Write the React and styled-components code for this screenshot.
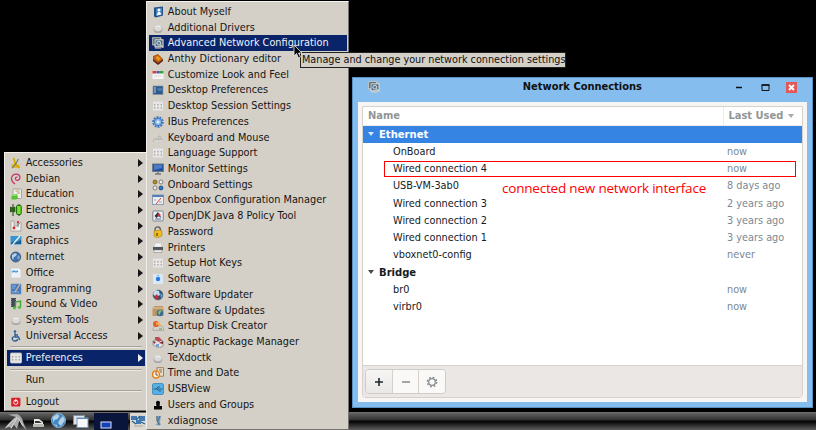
import React from 'react';
import styled, { createGlobalStyle } from 'styled-components';

const GlobalStyle = createGlobalStyle`
  * { box-sizing: border-box; }
  html, body { margin: 0; padding: 0; background: #000; overflow: hidden; }
`;

const Desktop = styled.main`
  position: relative;
  width: 816px;
  height: 430px;
  background: #000;
  overflow: hidden;
  font-family: 'DejaVu Sans Condensed', 'DejaVu Sans', sans-serif;
  font-stretch: condensed;
  font-size: 10.82px;
  color: #111;
  white-space: nowrap;
`;

/* ---------- menus ---------- */

const MenuPanel = styled.nav`
  position: absolute;
  left: ${(p) => p.$x}px;
  top: ${(p) => p.$y}px;
  width: ${(p) => p.$w}px;
  height: ${(p) => p.$h}px;
  padding: 2px 1px 0 2px;
  background: #d4d0c8;
  border: 1px solid;
  border-color: #f4f3f0 #77746f #77746f #f0eeea;
`;

const MenuRow = styled.div`
  display: flex;
  align-items: center;
  height: ${(p) => p.$h || 15.73}px;
  padding: 0 2px 0 3px;
  background: ${(p) => (p.$active ? '#0a246a' : 'transparent')};
  color: ${(p) => (p.$active ? '#f0f2f8' : '#151515')};
`;

const MenuIcon = styled.svg`
  flex: none;
  width: 12px;
  height: 12px;
  margin-right: 3.8px;
`;

const MenuLabel = styled.span`
  flex: 1;
  line-height: 14px;
`;

const Arrow = styled.span`
  border-left: 5px solid currentColor;
  border-top: 4px solid transparent;
  border-bottom: 4px solid transparent;
`;

const Separator = styled.hr`
  height: 2px;
  margin: ${(p) => p.$m};
  border: 0;
  border-top: 1px solid #a6a39c;
  border-bottom: 1px solid #ebe9e4;
`;

/* ---------- window ---------- */

const Window = styled.section`
  position: absolute;
  left: 352px;
  top: 77px;
  width: 461px;
  height: 331px;
  display: flex;
  flex-direction: column;
  padding: 0 5px 5px;
  background: #84bdee;
  border: 1px solid #5a92c4;
`;

const TitleBar = styled.header`
  display: flex;
  align-items: center;
  height: 24px;
  padding: 0 10px 7px 10px;
`;

const Title = styled.h1`
  flex: 1;
  margin: 0;
  padding-left: 46px;
  text-align: center;
  font-size: 11px;
  line-height: 14px;
  font-weight: bold;
  color: #111;
`;

const WindowButtons = styled.svg`
  width: 62px;
  height: 11px;
  margin-top: 1px;
`;

const WindowBody = styled.div`
  flex: 1;
  padding: 4px;
  background: #f6f5f3;
  display: flex;
`;

const ListFrame = styled.div`
  flex: 1;
  display: flex;
  flex-direction: column;
  border: 1px solid #d5d1cd;
  border-radius: 0 0 4px 4px;
  background: #fff;
`;

const HeaderRow = styled.div`
  display: flex;
  align-items: stretch;
  height: 18.7px;
  font-size: 11px;
  font-weight: bold;
  color: #929595;
  line-height: 18px;
  border-bottom: 1px solid #f0eeec;
`;

const NameHeader = styled.span`
  flex: 1;
  padding-left: 5px;
`;

const UsedHeader = styled.span`
  display: flex;
  align-items: center;
  gap: 5px;
  width: 79px;
  padding-left: 4.5px;
  border-left: 1px solid #eeecea;
`;

const Triangle = styled.span`
  border-top: 4px solid currentColor;
  border-left: 3.5px solid transparent;
  border-right: 3.5px solid transparent;
  opacity: 0.8;
`;

const ListRow = styled.div`
  display: flex;
  align-items: center;
  height: 17.22px;
  padding-left: ${(p) => (p.$group ? 4.5 : 30)}px;
  gap: ${(p) => (p.$group ? 5.5 : 0)}px;
  font-size: ${(p) => (p.$group ? '11.15px' : 'inherit')};
  font-weight: ${(p) => (p.$group ? 'bold' : 'normal')};
  color: ${(p) => (p.$selected ? '#fff' : '#151b1e')};
  background: ${(p) => (p.$selected ? '#3584e4' : 'transparent')};
`;

const Name = styled.span`
  flex: 1;
`;

const LastUsed = styled.span`
  width: 75px;
  color: #7b8893;
`;

const Toolbar = styled.footer`
  margin-top: auto;
  height: 32px;
  padding: 3px 2px;
  background: #ebe7e4;
  border-top: 1px solid #d5d1cd;
  border-radius: 0 0 3px 3px;
`;

const ButtonGroup = styled.div`
  display: flex;
  width: 81px;
  height: 25px;
  border: 1px solid #cfcbc7;
  border-radius: 4px;
  overflow: hidden;
`;

const ToolButton = styled.button`
  flex: 1;
  display: grid;
  place-items: center;
  padding: 0;
  border: 0;
  border-right: 1px solid #d5d1cd;
  background: ${(p) => (p.$enabled ? 'linear-gradient(#f6f5f4, #e9e8e6)' : '#faf9f8')};
  &:last-child { border-right: 0; }
`;

/* ---------- overlays ---------- */

const Highlight = styled.div`
  position: absolute;
  left: 384px;
  top: 161px;
  width: 412px;
  height: 16px;
  border: 1px solid #f00;
`;

const Annotation = styled.div`
  position: absolute;
  left: 502px;
  top: 178px;
  font-family: 'Open Sans', 'Noto Sans', sans-serif;
  font-stretch: normal;
  font-size: 13.5px;
  letter-spacing: -0.2px;
  line-height: 20px;
  color: #f00;
`;

const Tooltip = styled.div`
  position: absolute;
  left: 300px;
  top: 52px;
  width: 266px;
  height: 16px;
  padding-left: 1px;
  line-height: 14px;
  background: #d4d0c8;
  border: 1px solid #222;
  font-size: 10.76px;
  color: #111;
`;

const Cursor = styled.svg`
  position: absolute;
  left: 293px;
  top: 44px;
  width: 10px;
  height: 15px;
`;

/* ---------- task bar ---------- */

const TaskBar = styled.div`
  position: absolute;
  left: 0;
  top: 412px;
  width: 816px;
  height: 18px;
  display: flex;
  background: linear-gradient(#747474 0, #5a5a5a 2px, #303030 8px, #030303 9px, #141414 11px, #5c5c5c 18px);
`;

const TaskIcons = styled.svg`
  width: 148px;
  height: 18px;
`;

/* ---------- icon drawings, 12 x 12 grid ---------- */

const ball = (
  <>
    <ellipse cx="6" cy="7.4" rx="4.4" ry="3.6" fill="#aaa9a7" />
    <ellipse cx="6" cy="6.2" rx="3.8" ry="3" fill="#d9d9d8" />
    <path d="M3.5 5Q6 3 8.5 5" stroke="#f4f4f4" fill="none" />
  </>
);
const keys = (
  <>
    <rect x="0.5" y="1" width="11" height="10" rx="1" fill="#e6e5e3" stroke="#cfcdc9" strokeWidth=".8" />
    <path d="M2.7 4v4.500M6 4v4.500M9.300 4v4.500" stroke="#aaa8a4" strokeWidth="1.300" />
    <path d="M2 6.200h8.500" stroke="#f4f4f4" strokeWidth="1" />
  </>
);

const drawings = {
  ball,
  keys,
  accessories: (
    <>
      <path d="M1 8l4-2 5 3-2 2H2z" fill="#dcbc31" />
      <path d="M3.5 1l2 6 4 4" stroke="#d9a900" strokeWidth="1.8" fill="none" />
      <path d="M8.5 2L5 8l-3 3" stroke="#777" strokeWidth="1.2" fill="none" />
    </>
  ),
  debian: (
    <path d="M5 11C2 9 0.8 6 2 3.4 4 .2 9.4.5 10 4.2c.2 2.8-3.4 4.2-4.4 2C5 4.700 6.300 3.600 7.500 4.300" fill="none" stroke="#c93665" strokeWidth="1.2" />
  ),
  education: (
    <>
      <rect x="3" y="1" width="8.500" height="9.500" rx="1" fill="#f1efe7" stroke="#8b8b86" strokeWidth=".7" />
      <path d="M5.500 3h4M7 5h3" stroke="#b49767" />
      <path d="M1 10l2-4h4l1 4-2 1.500H2z" fill="#56c235" />
      <path d="M2.500 7h4" stroke="#c8f4b4" />
    </>
  ),
  electronics: (
    <>
      <path d="M3 0v12M9 0v12" stroke="#173b0c" />
      <path d="M0 3l3 1 2-1v5L3 7 0 8z" fill="#286b12" stroke="#173b0c" strokeWidth=".6" />
      <rect x="6.600" y="1.300" width="4.600" height="9.200" rx="1" fill="#71e52d" stroke="#1d5a0b" strokeWidth="1" />
    </>
  ),
  games: (
    <>
      <path d="M1 1h3v5h3l4-4v9H1z" fill="#f0eeee" stroke="#98918f" strokeWidth=".7" />
      <circle cx="4" cy="8" r="1.400" fill="#d82525" />
      <circle cx="8" cy="2.200" r="1.100" fill="#d82525" />
      <path d="M8 3v4" stroke="#777" />
    </>
  ),
  graphics: (
    <>
      <rect x=".5" y="1" width="11" height="8.500" fill="#3794d2" />
      <path d="M1 8l3-2 3 1 4-2v4H1z" fill="#1c5e91" />
      <path d="M10 1L4 8l-2 3" stroke="#f4f4f0" strokeWidth="1.300" />
      <path d="M1 11h9" stroke="#b9d2df" />
    </>
  ),
  globe: (
    <>
      <circle cx="5.700" cy="6" r="5" fill="#4070a8" stroke="#30517a" strokeWidth=".8" />
      <path d="M2 4l3-2 2 1-1 2-2 1-1 3-1-2z" fill="#b6cfe9" />
      <path d="M7 6l2-2 1 3-2 2z" fill="#7ba5cf" />
    </>
  ),
  office: (
    <>
      <path d="M1 1h7l3 3v7H1z" fill="#edf1f4" stroke="#c7cbd0" strokeWidth=".6" />
      <path d="M2 5l2-1 2 1 2-1" stroke="#4b9fdc" strokeWidth="1.400" fill="none" />
      <path d="M8 1l3 3H8z" fill="#fff" />
    </>
  ),
  programming: (
    <>
      <rect x="1" y="1" width="10" height="10" fill="#467ac0" stroke="#7495bc" strokeWidth=".6" />
      <path d="M2 3h4M2 5h3M2 9h7" stroke="#8eaedc" />
      <path d="M10 1L5 9" stroke="#d5bc88" strokeWidth="1.300" />
    </>
  ),
  sound: (
    <>
      <rect x="1" y="0" width="5" height="9" fill="#414b56" />
      <path d="M1 1v7M6 1v7" stroke="#d9dde0" strokeDasharray="1 1" strokeWidth=".8" />
      <path d="M5.500 10V4l5-1v6" stroke="#41a433" strokeWidth="1.400" fill="none" />
      <ellipse cx="4.500" cy="10" rx="1.700" ry="1.400" fill="#54bd40" />
      <ellipse cx="9.500" cy="9.500" rx="1.700" ry="1.400" fill="#54bd40" />
    </>
  ),
  access: (
    <>
      <circle cx="5" cy="1.500" r="1.300" fill="#285e98" />
      <path d="M5 3v4h3.500l1.300 3M5 5h3M4 6.500C.8 8 2.500 11.200 5 11c1.600 0 2.600-1 2.800-2" fill="none" stroke="#285e98" strokeWidth="1.300" />
    </>
  ),
  logout: (
    <>
      <rect x="1.200" y="1.700" width="9.200" height="8.800" rx="1" fill="#d92129" />
      <circle cx="5.800" cy="6.300" r="2.100" fill="none" stroke="#fff" strokeWidth=".9" />
      <path d="M5.800 3v3" stroke="#fff" />
    </>
  ),
  about: (
    <>
      <path d="M2 1.500l9-1v9l-7 2-2-1z" fill="#244f86" />
      <path d="M4 2.500l6-.7v7L4 10z" fill="#4482bd" />
      <circle cx="7" cy="4" r="1.500" fill="#fff" />
      <path d="M4.500 9.500L6 6h2l1.500 2.500z" fill="#f7faff" />
    </>
  ),
  network: (
    <>
      <rect x=".8" y=".8" width="8" height="7" fill="#29496e" stroke="#cfcbbd" strokeWidth="1.100" />
      <rect x="3" y="2.800" width="8" height="7" fill="#40668d" stroke="#dedaca" strokeWidth="1.100" />
      <circle cx="6.800" cy="6.200" r="2" fill="#5f7fa0" stroke="#ece9dc" strokeWidth=".9" />
      <path d="M8.300 7.700l3 3M3 11h6" stroke="#d8d4c6" strokeWidth="1.200" />
    </>
  ),
  book: (
    <>
      <path d="M1 3l5-2 5 5-5 5-5-5z" fill="#b75b12" />
      <path d="M1 6l5 4 5-4v2l-5 4-5-4z" fill="#5d2310" />
      <path d="M3 4l3-1 3 3-3 2z" fill="#e69823" />
    </>
  ),
  look: (
    <>
      <rect x=".5" y="2" width="11" height="8" fill="#f6f5f5" />
      <rect x=".5" y="2" width="3.500" height="2.500" fill="#dd3c32" />
      <rect x="4.300" y="2" width="3.500" height="2.500" fill="#5a58a4" />
      <rect x="8" y="2" width="3.500" height="2.500" fill="#34a744" />
      <path d="M2 7h8" stroke="#e4d2d2" />
    </>
  ),
  desktop: (
    <>
      <rect x="1" y="2" width="10" height="8.500" fill="#2e5a89" stroke="#8795a6" strokeWidth=".7" />
      <path d="M2 4h2M2 6h2M2 8h2" stroke="#b6cde3" />
      <path d="M5 4h5v3H6z" fill="#477aaa" />
    </>
  ),
  ibus: (
    <>
      <circle cx="6" cy="6" r="4.900" fill="none" stroke="#3b74bb" strokeWidth="1.800" strokeDasharray="2 1" />
      <circle cx="6" cy="6" r="3.700" fill="#8ab8e8" stroke="#3977bf" />
      <circle cx="6" cy="6" r="1.500" fill="#e8f1fb" />
    </>
  ),
  keyboard: (
    <>
      <path d="M1 8l2-2h7l1.500 3v1H1z" fill="#bebcb8" />
      <path d="M2 9h9" stroke="#ecebe8" />
      <path d="M6 5q1-2 3 0" stroke="#aaa8a4" fill="none" />
    </>
  ),
  monitor: (
    <>
      <rect x=".6" y="1" width="10.800" height="7.500" fill="#244fa0" stroke="#677b84" />
      <path d="M2 2h8v3L2 7z" fill="#4b7ac6" />
      <path d="M6 9v2M3 11h6" stroke="#74777a" strokeWidth="1.300" />
    </>
  ),
  onboard: (
    <>
      <circle cx="3" cy="3" r="2" fill="#b58f19" stroke="#5d532d" strokeWidth=".7" />
      <circle cx="9" cy="3" r="2" fill="#eee" stroke="#6d6b64" strokeWidth=".8" />
      <circle cx="3" cy="9" r="2" fill="#eee" stroke="#6d6b64" strokeWidth=".8" />
      <circle cx="9" cy="9" r="2" fill="#2276cc" stroke="#163e6a" strokeWidth=".7" />
    </>
  ),
  openbox: (
    <>
      <rect x=".5" y="1" width="11" height="9.500" fill="#ececf0" stroke="#7b8eac" strokeWidth=".8" />
      <rect x=".5" y="1" width="11" height="2" fill="#547fb7" />
      <path d="M9 4L4 10" stroke="#d14a47" />
      <path d="M2 6h2M7 8h3" stroke="#a4a8b2" />
    </>
  ),
  java: (
    <>
      <rect x=".8" y="1" width="10.400" height="10" rx="1" fill="#eeeef0" stroke="#727a86" strokeWidth=".9" />
      <path d="M6 2L2.500 6l2 2 2-2 3 2z" fill="#233448" />
      <circle cx="7" cy="5" r="1.500" fill="#d52e35" />
      <path d="M3 9h6" stroke="#436a9f" />
    </>
  ),
  lock: (
    <>
      <path d="M3 6V3.500C3 0 8.500 0 8.500 4v2" stroke="#5f5e59" strokeWidth="1.300" fill="none" />
      <path d="M2 5l6-1 2 1v5l-5 2-3-2z" fill="#eebb20" stroke="#a37911" strokeWidth=".5" />
      <path d="M5 7v3" stroke="#54430e" strokeWidth="1.200" />
    </>
  ),
  printer: (
    <>
      <path d="M3 1h6l1 4H2z" fill="#f5f5f5" stroke="#b8b8b8" strokeWidth=".5" />
      <path d="M1 5h10v3H1z" fill="#55585a" />
      <path d="M2 8h8v2.500H2z" fill="#eee" stroke="#7b7b7b" strokeWidth=".5" />
    </>
  ),
  software: (
    <>
      <rect x="1" y="1" width="10" height="10" rx="1" fill="#d7e9fb" />
      <path d="M4.500 3q1.500-2 3 0" stroke="#83b1e8" fill="none" />
      <circle cx="6" cy="6" r="2.200" fill="#2c7adf" />
    </>
  ),
  updater: (
    <>
      <circle cx="6" cy="6" r="5" fill="#284f7d" stroke="#52647b" strokeWidth=".5" />
      <path d="M3 1l4 1 1 4-4 2-3-3z" fill="#c8dbeb" />
      <path d="M2 8l3-3 2 4-2 2z" fill="#c12f2f" />
      <path d="M8 4l3 2-2 4z" fill="#6895c0" />
    </>
  ),
  box: (
    <>
      <path d="M.5 3l2-2h8l1 2v8H.5z" fill="#bd9563" />
      <path d="M.5 3h11" stroke="#e3c69c" />
      <circle cx="8" cy="8" r="3.300" fill="#386c9b" />
      <path d="M6 7l2-2 2 1-2 2v2L6.500 9z" fill="#8abf62" />
    </>
  ),
  disk: (
    <>
      <path d="M1 8l2-2h7l1.500 2v2.500H1z" fill="#d3d0ca" stroke="#8f8b83" strokeWidth=".5" />
      <circle cx="4" cy="4" r="3" fill="#e55b31" />
      <path d="M4 2.500q4-1 5 3l-2 1Q7 4 4 4.500z" fill="#f3b34d" />
      <path d="M7 9h3" stroke="#61a542" />
    </>
  ),
  synaptic: (
    <>
      <path d="M1 5l4-2 6 2v5l-4 2-6-3z" fill="#e5e1e1" stroke="#706c6e" strokeWidth=".6" />
      <path d="M3 1l4 0 3 3-3 2-4-2z" fill="#b94e58" />
      <path d="M1 5l3 1-2 2zM7 7l4-2v3z" fill="#7a2533" />
      <path d="M4 8h3v3H4z" fill="#7ea1cf" />
    </>
  ),
  clock: (
    <>
      <rect x="5" y=".7" width="6.500" height="8.500" fill="#e8dfca" stroke="#9a7947" strokeWidth=".9" />
      <path d="M7 3h3M8 5h2" stroke="#7c6547" />
      <circle cx="4" cy="7.500" r="3.500" fill="#fff5e5" stroke="#e87c0e" strokeWidth="1.500" />
      <path d="M4 5v3h2" stroke="#714218" strokeWidth=".9" fill="none" />
    </>
  ),
  usb: (
    <>
      <rect x=".5" y=".5" width="11" height="11" rx="1.500" fill="#55b0e5" stroke="#2e7cad" strokeWidth=".7" />
      <path d="M1.500 6h9M4 6l2-2h2M5 6l2 2h2" stroke="#245b7e" strokeWidth=".9" fill="none" />
    </>
  ),
  user: <path d="M4 3q2-2.500 4 0L7.600 7H10v3.500H2V7h2.400z" fill="#050505" />,
  diagnose: (
    <>
      <path d="M4 1h5L8 7l1 4H3l2-3z" fill="#85a3bd" />
      <path d="M5 1v5l2 2v3M8 1L6 6" stroke="#3b5d7a" strokeWidth=".9" fill="none" />
      <path d="M3 11h6" stroke="#e4e7ea" />
    </>
  ),
};

const Icon = ({ name }) => <MenuIcon viewBox="0 0 12 12">{drawings[name]}</MenuIcon>;

const mainMenu = [
  ['Accessories', 'accessories'],
  ['Debian', 'debian'],
  ['Education', 'education'],
  ['Electronics', 'electronics'],
  ['Games', 'games'],
  ['Graphics', 'graphics'],
  ['Internet', 'globe'],
  ['Office', 'office'],
  ['Programming', 'programming'],
  ['Sound & Video', 'sound'],
  ['System Tools', 'ball'],
  ['Universal Access', 'access'],
];

const preferences = [
  ['About Myself', 'about'],
  ['Additional Drivers', 'ball'],
  ['Advanced Network Configuration', 'network'],
  ['Anthy Dictionary editor', 'book'],
  ['Customize Look and Feel', 'look'],
  ['Desktop Preferences', 'desktop'],
  ['Desktop Session Settings', 'keys'],
  ['IBus Preferences', 'ibus'],
  ['Keyboard and Mouse', 'keyboard'],
  ['Language Support', 'keys'],
  ['Monitor Settings', 'monitor'],
  ['Onboard Settings', 'onboard'],
  ['Openbox Configuration Manager', 'openbox'],
  ['OpenJDK Java 8 Policy Tool', 'java'],
  ['Password', 'lock'],
  ['Printers', 'printer'],
  ['Setup Hot Keys', 'keys'],
  ['Software', 'software'],
  ['Software Updater', 'updater'],
  ['Software & Updates', 'box'],
  ['Startup Disk Creator', 'disk'],
  ['Synaptic Package Manager', 'synaptic'],
  ['TeXdoctk', 'ball'],
  ['Time and Date', 'clock'],
  ['USBView', 'usb'],
  ['Users and Groups', 'user'],
  ['xdiagnose', 'diagnose'],
];

const connections = [
  { group: 'Ethernet', selected: true },
  { name: 'OnBoard', used: 'now' },
  { name: 'Wired connection 4', used: 'now' },
  { name: 'USB-VM-3ab0', used: '8 days ago' },
  { name: 'Wired connection 3', used: '2 years ago' },
  { name: 'Wired connection 2', used: '3 years ago' },
  { name: 'Wired connection 1', used: '3 years ago' },
  { name: 'vboxnet0-config', used: 'never' },
  { group: 'Bridge' },
  { name: 'br0', used: 'now' },
  { name: 'virbr0', used: 'now' },
];

const MainMenu = () => (
  <MenuPanel $x={4} $y={152} $w={143} $h={259}>
    {mainMenu.map(([label, icon]) => (
      <MenuRow key={label}>
        <Icon name={icon} />
        <MenuLabel>{label}</MenuLabel>
        <Arrow />
      </MenuRow>
    ))}
    <Separator $m="2.2px 3px" />
    <MenuRow $active $h={16}>
      <Icon name="keys" />
      <MenuLabel>Preferences</MenuLabel>
      <Arrow />
    </MenuRow>
    <Separator $m="3px 3px 1px" />
    <MenuRow $h={16}>
      <Icon />
      <MenuLabel>Run</MenuLabel>
    </MenuRow>
    <Separator $m="2px 3px" />
    <MenuRow $h={16}>
      <Icon name="logout" />
      <MenuLabel>Logout</MenuLabel>
    </MenuRow>
  </MenuPanel>
);

const NetworkWindow = () => (
  <Window>
    <TitleBar>
      <MenuIcon viewBox="0 0 12 12">{drawings.network}</MenuIcon>
      <Title>Network Connections</Title>
      <WindowButtons viewBox="0 0 62 11">
        <path d="M1 5.500h6" stroke="#111" strokeWidth="1.500" />
        <path d="M27 3h7v5.500h-7z" fill="none" stroke="#111" />
        <path d="M26.500 3h8" stroke="#111" strokeWidth="1.600" />
        <rect x="51" y="0" width="11" height="11" fill="#e45757" />
        <path d="M54 3l5 5M59 3l-5 5" stroke="#fff" strokeWidth="1.900" />
      </WindowButtons>
    </TitleBar>
    <WindowBody>
      <ListFrame>
        <HeaderRow>
          <NameHeader>Name</NameHeader>
          <UsedHeader>
            Last Used
            <Triangle />
          </UsedHeader>
        </HeaderRow>
        {connections.map((row) =>
          row.group ? (
            <ListRow key={row.group} $group $selected={row.selected}>
              <Triangle />
              {row.group}
            </ListRow>
          ) : (
            <ListRow key={row.name}>
              <Name>{row.name}</Name>
              <LastUsed>{row.used}</LastUsed>
            </ListRow>
          )
        )}
        <Toolbar>
          <ButtonGroup>
            <ToolButton $enabled aria-label="Add">
              <svg width="10" height="10" viewBox="0 0 10 10">
                <path d="M1 5h8M5 1v8" stroke="#20282d" strokeWidth="1.600" />
              </svg>
            </ToolButton>
            <ToolButton aria-label="Remove">
              <svg width="10" height="10" viewBox="0 0 10 10">
                <path d="M1 5h8" stroke="#858b8e" strokeWidth="1.500" />
              </svg>
            </ToolButton>
            <ToolButton aria-label="Settings">
              <svg width="12" height="12" viewBox="0 0 12 12">
                <circle cx="6" cy="6" r="4.700" fill="none" stroke="#858b8e" strokeWidth="1.400" strokeDasharray="1.850 1.850" />
                <circle cx="6" cy="6" r="3.300" fill="none" stroke="#858b8e" strokeWidth="1.300" />
              </svg>
            </ToolButton>
          </ButtonGroup>
        </Toolbar>
      </ListFrame>
    </WindowBody>
  </Window>
);

const Panel = () => (
  <TaskBar>
    <TaskIcons viewBox="0 0 148 18">
      <path d="M8 2.500l9-.5q5 2 6.500 9l3 7q-5-4-7-10L17 17l-3-4-3 4-1-2-5 1q6-8 11-11z" fill="#a9abab" />
      <path d="M5.500 16L17 5M11 16l6-10M18 6l5 8" stroke="#dcdddd" strokeWidth=".9" fill="none" />
      <path d="M34 7h5l4 3v5h-9z" fill="#eceae5" />
      <path d="M33 12h11v3H33z" fill="#b6b5af" />
      <path d="M35 9h4l3 2h-7z" fill="#333" />
      <circle cx="58.500" cy="8.500" r="7" fill="#4387c0" stroke="#8bb5d7" />
      <path d="M52.500 5l5-3 2 2-2 3-3 1-1 3zM60 7l3-3 2 4-4 6-3-3zM54 12l3 1v2z" fill="#b2d0e6" />
      <rect x="73.500" y="3.500" width="11" height="9" fill="#dce3ea" stroke="#7e8d9f" />
      <rect x="77" y="6" width="11" height="9.500" fill="#f7f8f9" stroke="#8197b2" />
      <path d="M77 6.500h11" stroke="#5b89bb" />
      <rect x="94" y="1" width="34" height="17" fill="#09153b" />
      <rect x="101" y="10" width="10" height="6" fill="#1440ba" stroke="#dfe5f4" />
      <rect x="130" y="1" width="18" height="17" fill="#ddd9d2" />
      <path d="M131 4h6v4h-6zM136 8h5v4h-5zM139 4h6v5h-6z" fill="#417ab0" />
      <path d="M132 9l4 3M140 4l-4 4M141 10l4 2" stroke="#2b5c8d" strokeWidth="1.300" />
      <path d="M134 14h9" stroke="#aaa69f" />
    </TaskIcons>
  </TaskBar>
);

export default function App() {
  return (
    <Desktop>
      <GlobalStyle />
      <Panel />
      <MainMenu />
      <NetworkWindow />
      <MenuPanel $x={146} $y={1} $w={203} $h={429}>
        {preferences.map(([label, icon]) => (
          <MenuRow key={label} $active={icon === 'network'}>
            <Icon name={icon} />
            <MenuLabel>{label}</MenuLabel>
          </MenuRow>
        ))}
      </MenuPanel>
      <Highlight />
      <Annotation>connected new network interface</Annotation>
      <Tooltip>Manage and change your network connection settings</Tooltip>
      <Cursor viewBox="0 0 10 15">
        <path d="M1 1v11l2.500-2.500L5.500 14l2-1-2-4H9z" fill="#050505" stroke="#e9e9e9" strokeWidth=".8" />
      </Cursor>
    </Desktop>
  );
}
